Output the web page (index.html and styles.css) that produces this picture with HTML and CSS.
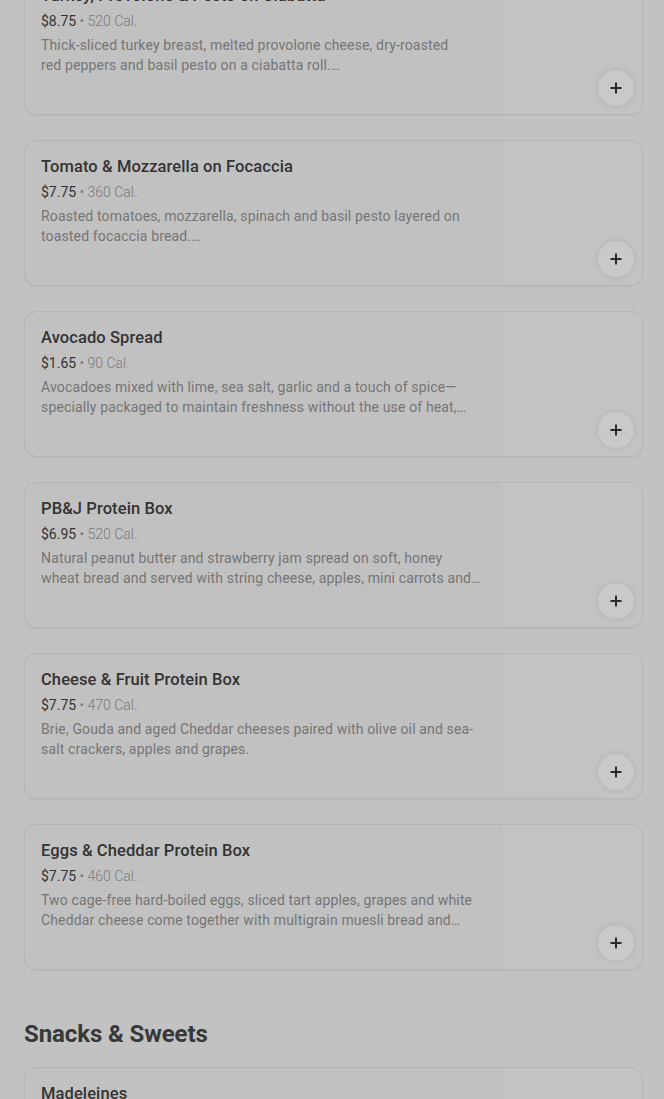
FILE: index.html
```html
<!DOCTYPE html>
<html lang="en">
<head>
<meta charset="utf-8">
<title>Menu</title>
<link rel="stylesheet" href="styles.css">
</head>
<body>
<main class="menu">
  <section class="section first">
    <div class="list">
      <article class="card">
        <div class="info">
          <h3 class="name">Turkey, Provolone &amp; Pesto on Ciabatta</h3>
          <p class="meta"><span class="price">$8.75</span> • 520 Cal.</p>
          <p class="desc">Thick-sliced turkey breast, melted provolone cheese, dry-roasted<br>red peppers and basil pesto on a ciabatta roll.…</p>
        </div>
        <div class="thumb"><button class="add" aria-label="Add"><svg viewBox="0 0 12 12" width="12" height="12"><path d="M6 0.5v11M0.5 6h11" stroke="currentColor" stroke-width="2"/></svg></button></div>
      </article>
      <article class="card">
        <div class="info">
          <h3 class="name">Tomato &amp; Mozzarella on Focaccia</h3>
          <p class="meta"><span class="price">$7.75</span> • 360 Cal.</p>
          <p class="desc">Roasted tomatoes, mozzarella, spinach and basil pesto layered on toasted focaccia bread.…</p>
        </div>
        <div class="thumb"><button class="add" aria-label="Add"><svg viewBox="0 0 12 12" width="12" height="12"><path d="M6 0.5v11M0.5 6h11" stroke="currentColor" stroke-width="2"/></svg></button></div>
      </article>
      <article class="card">
        <div class="info">
          <h3 class="name">Avocado Spread</h3>
          <p class="meta"><span class="price">$1.65</span> • 90 Cal.</p>
          <p class="desc">Avocadoes mixed with lime, sea salt, garlic and a touch of spice—specially packaged to maintain freshness without the use of heat,…</p>
        </div>
        <div class="thumb"><button class="add" aria-label="Add"><svg viewBox="0 0 12 12" width="12" height="12"><path d="M6 0.5v11M0.5 6h11" stroke="currentColor" stroke-width="2"/></svg></button></div>
      </article>
      <article class="card">
        <div class="info">
          <h3 class="name">PB&amp;J Protein Box</h3>
          <p class="meta"><span class="price">$6.95</span> • 520 Cal.</p>
          <p class="desc">Natural peanut butter and strawberry jam spread on soft, honey<br>wheat bread and served with string cheese, apples, mini carrots and…</p>
        </div>
        <div class="thumb"><button class="add" aria-label="Add"><svg viewBox="0 0 12 12" width="12" height="12"><path d="M6 0.5v11M0.5 6h11" stroke="currentColor" stroke-width="2"/></svg></button></div>
      </article>
      <article class="card">
        <div class="info">
          <h3 class="name">Cheese &amp; Fruit Protein Box</h3>
          <p class="meta"><span class="price">$7.75</span> • 470 Cal.</p>
          <p class="desc">Brie, Gouda and aged Cheddar cheeses paired with olive oil and sea-salt crackers, apples and grapes.</p>
        </div>
        <div class="thumb"><button class="add" aria-label="Add"><svg viewBox="0 0 12 12" width="12" height="12"><path d="M6 0.5v11M0.5 6h11" stroke="currentColor" stroke-width="2"/></svg></button></div>
      </article>
      <article class="card">
        <div class="info">
          <h3 class="name">Eggs &amp; Cheddar Protein Box</h3>
          <p class="meta"><span class="price">$7.75</span> • 460 Cal.</p>
          <p class="desc">Two cage-free hard-boiled eggs, sliced tart apples, grapes and white Cheddar cheese come together with multigrain muesli bread and…</p>
        </div>
        <div class="thumb"><button class="add" aria-label="Add"><svg viewBox="0 0 12 12" width="12" height="12"><path d="M6 0.5v11M0.5 6h11" stroke="currentColor" stroke-width="2"/></svg></button></div>
      </article>
    </div>
  </section>
  <section class="section">
    <h2 class="section-title">Snacks &amp; Sweets</h2>
    <div class="list">
      <article class="card">
        <div class="info">
          <h3 class="name">Madeleines</h3>
          <p class="meta"><span class="price">$2.45</span> • 180 Cal.</p>
          <p class="desc">Traditional French sponge cakes with a light, buttery flavor.</p>
        </div>
        <div class="thumb"><button class="add" aria-label="Add"><svg viewBox="0 0 12 12" width="12" height="12"><path d="M6 0.5v11M0.5 6h11" stroke="currentColor" stroke-width="2"/></svg></button></div>
      </article>
    </div>
  </section>
</main>
</body>
</html>
```
FILE: styles.css
```css
* { box-sizing: border-box; }
html, body { margin: 0; padding: 0; }
body {
  background: #c2c2c2;
  font-family: Roboto, "Liberation Sans", Arial, sans-serif;
  overflow: hidden;
  height: 1099px;
}
.menu {
  padding: 0 21px 0 24px;
  margin-top: -31px;
}
.section-title {
  margin: 48px 0 17px;
  font-size: 24px;
  line-height: 32px;
  font-weight: 700;
  color: #383838;
  letter-spacing: -0.1px;
}
.list {
  display: flex;
  flex-direction: column;
  gap: 25px;
}
.card {
  display: flex;
  height: 146px;
  border: 1px solid #b5b5b5;
  border-radius: 12px;
  background: #c1c1c1;
  box-shadow: 0 1px 1px rgba(0,0,0,0.04);
  overflow: hidden;
}
.info {
  width: 476px;
  padding: 14px 12px 0 16px;
}
.name {
  margin: 0;
  font-size: 16.5px;
  line-height: 24px;
  font-weight: 500;
  color: #333333;
  letter-spacing: 0.1px;
}
.meta {
  margin: 3px 0 0;
  font-size: 14px;
  line-height: 20px;
  color: #7a7a7a;
  font-weight: 300;
}
.price { color: #333333; font-weight: 400; }
.desc {
  margin: 4px 0 0;
  font-size: 14px;
  line-height: 20px;
  color: #757575;
  letter-spacing: 0.15px;
  display: -webkit-box;
  -webkit-line-clamp: 2;
  -webkit-box-orient: vertical;
  overflow: hidden;
}
.thumb {
  flex: 1;
  position: relative;
  background: #c3c3c3;
  border-left: 1px solid #c0c0c0;
}
.add {
  position: absolute;
  right: 8px;
  bottom: 8px;
  width: 36px;
  height: 36px;
  border: none;
  border-radius: 50%;
  background: #c9c9c9;
  box-shadow: 0 0 6px rgba(0,0,0,0.10);
  color: #2a2a2a;
  display: flex;
  align-items: center;
  justify-content: center;
  padding: 0;
}
```
